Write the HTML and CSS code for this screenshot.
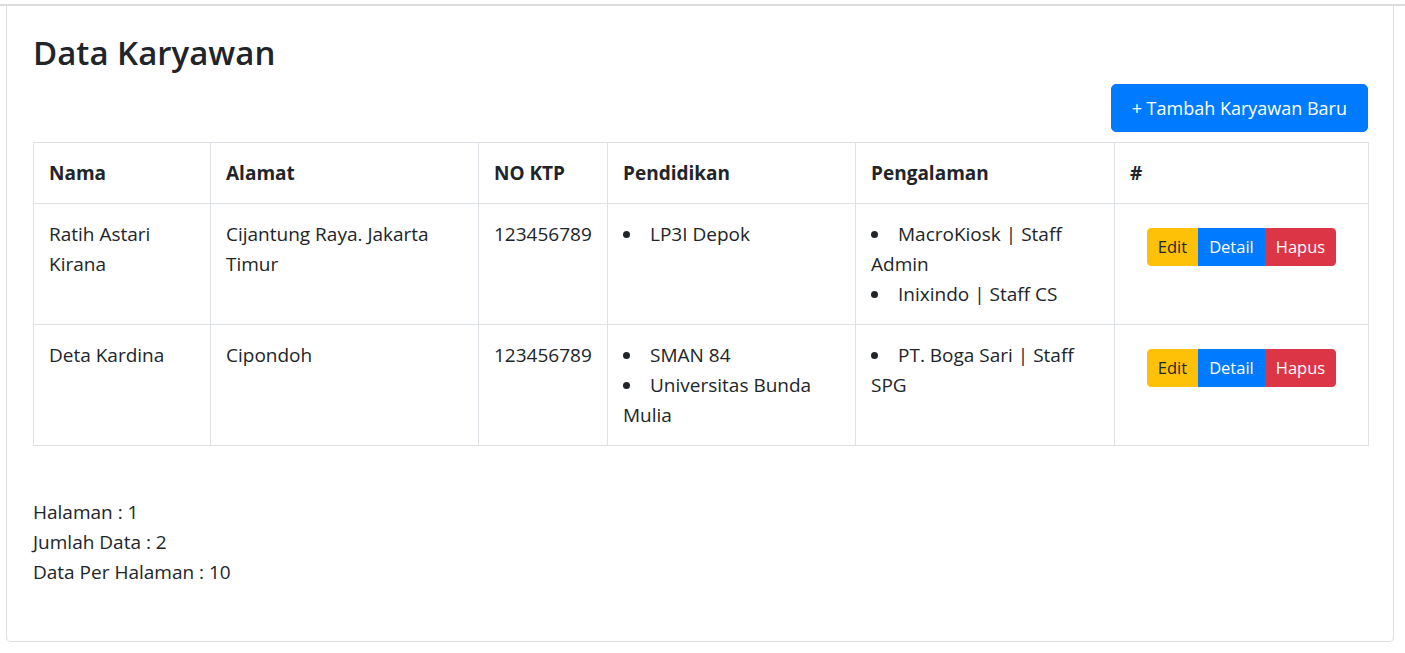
FILE: index.html
```html
<!DOCTYPE html>
<html lang="id">
<head>
<meta charset="utf-8">
<title>Data Karyawan</title>
<link rel="stylesheet" href="styles.css">
</head>
<body>
<div class="topbar"></div>
<div class="card">
  <div class="card-body">
    <h3 class="title">Data Karyawan</h3>
    <div class="toolbar">
      <a class="btn btn-lg btn-primary" href="#">+ Tambah Karyawan Baru</a>
    </div>
    <table class="table">
      <colgroup>
        <col class="c-nama">
        <col class="c-alamat">
        <col class="c-ktp">
        <col class="c-pend">
        <col class="c-peng">
        <col class="c-aksi">
      </colgroup>
      <thead>
        <tr>
          <th>Nama</th>
          <th>Alamat</th>
          <th>NO KTP</th>
          <th>Pendidikan</th>
          <th>Pengalaman</th>
          <th>#</th>
        </tr>
      </thead>
      <tbody>
        <tr>
          <td>Ratih Astari Kirana</td>
          <td>Cijantung Raya. Jakarta Timur</td>
          <td>123456789</td>
          <td><ul class="list"><li>LP3I Depok</li></ul></td>
          <td><ul class="list"><li>MacroKiosk | Staff Admin</li><li>Inixindo | Staff CS</li></ul></td>
          <td class="actions">
            <div class="btn-group">
              <a class="btn btn-sm btn-warning" href="#">Edit</a><a class="btn btn-sm btn-primary" href="#">Detail</a><a class="btn btn-sm btn-danger" href="#">Hapus</a>
            </div>
          </td>
        </tr>
        <tr>
          <td>Deta Kardina</td>
          <td>Cipondoh</td>
          <td>123456789</td>
          <td><ul class="list"><li>SMAN 84</li><li>Universitas Bunda Mulia</li></ul></td>
          <td><ul class="list"><li>PT. Boga Sari | Staff SPG</li></ul></td>
          <td class="actions">
            <div class="btn-group">
              <a class="btn btn-sm btn-warning" href="#">Edit</a><a class="btn btn-sm btn-primary" href="#">Detail</a><a class="btn btn-sm btn-danger" href="#">Hapus</a>
            </div>
          </td>
        </tr>
      </tbody>
    </table>
    <div class="summary">
      <div>Halaman : 1</div>
      <div>Jumlah Data : 2</div>
      <div>Data Per Halaman : 10</div>
    </div>
  </div>
</div>
</body>
</html>
```

FILE: styles.css
```css
* { box-sizing: border-box; }

html, body {
  margin: 0;
  padding: 0;
  background: #fff;
}

body {
  font-family: "Open Sans", "Noto Sans", sans-serif;
  font-size: 19px;
  line-height: 30px;
  color: #212529;
  padding-top: 4px;
}

.topbar {
  height: 2px;
  background: #dcdcdf;
}

.card {
  margin: 0 11px 0 6px;
  border: 1px solid #dfdfdf;
  border-top: 0;
  border-radius: 0 0 5px 5px;
  height: 636px;
}

.card-body {
  padding: 26px 25px 25px 26px;
}

.title {
  margin: 0 0 10px;
  font-size: 33px;
  font-weight: 600;
  line-height: 42px;
}

.toolbar {
  display: flex;
  justify-content: flex-end;
  margin-bottom: 10px;
}

.btn {
  display: inline-block;
  text-decoration: none;
  color: #fff;
  border: 1px solid transparent;
  text-align: center;
  white-space: nowrap;
}

.btn-lg {
  font-size: 18px;
  line-height: 30px;
  padding: 8px 20px;
  border-radius: 5px;
}

.btn-sm {
  font-size: 16.5px;
  line-height: 26px;
  padding: 5px 10px;
}

.btn-primary { background: #007bff; border-color: #007bff; color: #fff; }
.btn-warning { background: #ffc107; border-color: #ffc107; color: #212529; }
.btn-danger  { background: #dc3545; border-color: #dc3545; color: #fff; }

.btn-group {
  display: inline-flex;
  margin-top: 9px;
}
.btn-group .btn { border-radius: 0; }
.btn-group .btn:first-child { border-radius: 4px 0 0 4px; }
.btn-group .btn:last-child { border-radius: 0 4px 4px 0; }

.table {
  width: 1335px;
  border-collapse: collapse;
  table-layout: fixed;
  margin-bottom: 51px;
}

.c-nama { width: 177px; }
.c-alamat { width: 268px; }
.c-ktp { width: 129px; }
.c-pend { width: 248px; }
.c-peng { width: 259px; }
.c-aksi { width: 254px; }

.table th,
.table td {
  border: 1px solid #dee2e6;
  padding: 15px;
  text-align: left;
  vertical-align: top;
}

.table th {
  font-weight: 700;
}

.table td.actions {
  text-align: center;
}

.list {
  list-style: disc inside;
  margin: 0;
  padding: 0;
}

.summary {
  line-height: 30px;
}
```
